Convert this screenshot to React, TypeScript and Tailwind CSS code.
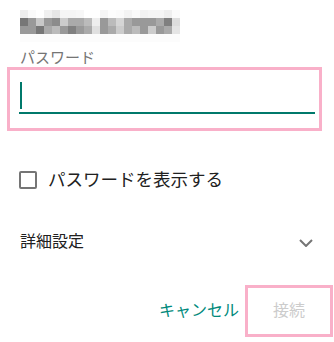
// ぼかし済みの SSID（モザイク）
const mosaic: string[][] = [
  ['#eeeeee', '#fafafa', '#ffffff', '#f0f0f0', '#e6e6e6', '#f5f5f5', '#f5f5f5', '#f7f7f7', '#ffffff', '#ffffff', '#f5f5f5', '#fcfcfc', '#fafafa', '#f3f3f3', '#fafafa', '#f2f2f2', '#f5f5f5', '#f5f5f5', '#eeeeee', '#fafafa'],
  ['#777777', '#999999', '#c8c8c8', '#999999', '#8c8c8c', '#cccccc', '#aaaaaa', '#aaaaaa', '#bbbbbb', '#eeeeee', '#999999', '#bbbbbb', '#d5d5d5', '#aaaaaa', '#999999', '#999999', '#999999', '#aaaaaa', '#808080', '#dddddd'],
  ['#999999', '#999999', '#777777', '#aaaaaa', '#bbbbbb', '#999999', '#808080', '#999999', '#aaaaaa', '#e0e0e0', '#999999', '#aaaaaa', '#cccccc', '#aaaaaa', '#bbbbbb', '#999999', '#cccccc', '#999999', '#aaaaaa', '#e5e5e5'],
  Array(20).fill('#fcfcfc'),
];

export default function App() {
  return (
    <div className="w-[334px] h-[342px] bg-white overflow-hidden font-['Roboto','Noto_Sans_CJK_JP',sans-serif]">
      {/* SSID */}
      <div className="pl-[20px] pt-[10px]">
        <div className="grid grid-cols-[repeat(20,8px)]">
          {mosaic.flatMap((row, r) =>
            row.map((c, i) => <div key={`${r}-${i}`} className="h-[8px]" style={{ background: c }} />)
          )}
        </div>
      </div>

      {/* パスワード */}
      <div className="ml-[20px] mt-[9px] text-[15px] leading-[15px] text-[#757575]">パスワード</div>
      <div className="ml-[7px] mt-[1px] w-[315px] h-[64px] border-[3px] border-[#f9b0c9] pl-[9px] pt-[12px]">
        <div className="ml-[1px] w-[2px] h-[27px] bg-[#00796b]" />
        <div className="mt-[3px] w-[296px] h-[2px] bg-[#00796b]" />
      </div>

      {/* パスワードを表示 */}
      <label className="mt-[40px] flex items-center h-[18px]">
        <span className="ml-[19px] w-[18px] h-[18px] border-2 border-[#757575] rounded-[2px]" />
        <span className="ml-[11px] text-[17.5px] leading-[18px] text-[#212121]">パスワードを表示する</span>
      </label>

      {/* 詳細設定 */}
      <div className="mt-[45px] flex items-center justify-between pl-[20px] pr-[21px] h-[16px]">
        <span className="text-[16px] leading-[16px] text-[#212121]">詳細設定</span>
        <svg width="14" height="8" viewBox="0 0 14 8" fill="none" className="mt-[1px]">
          <polyline points="1,1 7,7 13,1" stroke="#757575" strokeWidth="2" />
        </svg>
      </div>

      {/* ボタン */}
      <div className="mt-[35px] flex items-center justify-end pr-[1px]">
        <button className="text-[16px] text-[#00897b] mr-[6px]">キャンセル</button>
        <button className="w-[88px] h-[52px] border-[3px] border-[#f9b0c9] flex items-center justify-center text-[16px] text-[#cccccc]">
          接続
        </button>
      </div>
    </div>
  );
}
